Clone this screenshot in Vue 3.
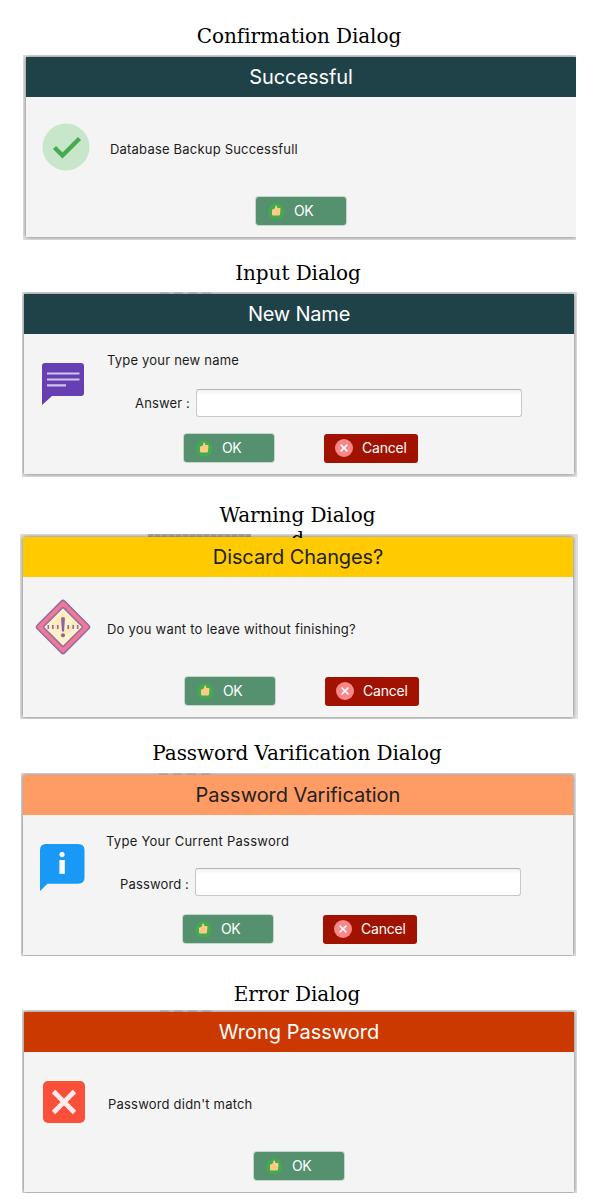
<script setup>
const dialogs = [
  { id: 'confirm', heading: 'Confirmation Dialog', title: 'Successful', message: 'Database Backup Successfull' },
  { id: 'input', heading: 'Input Dialog', title: 'New Name', message: 'Type your new name', label: 'Answer :', cancel: true },
  { id: 'warning', heading: 'Warning Dialog', overflow: 'd', title: 'Discard Changes?', message: 'Do you want to leave without finishing?', cancel: true },
  { id: 'password', heading: 'Password Varification Dialog', title: 'Password Varification', message: 'Type Your Current Password', label: 'Password :', cancel: true },
  { id: 'error', heading: 'Error Dialog', title: 'Wrong Password', message: "Password didn't match" },
]
</script>

<template>
  <main class="page">
    <section v-for="d in dialogs" :key="d.id" :class="['sample', d.id]">
      <h2 class="heading">{{ d.heading }}<template v-if="d.overflow"><br>{{ d.overflow }}</template></h2>
      <div class="frame">
        <i v-if="d.id !== 'confirm'" class="smudge"></i>
        <div class="dialog">
          <header class="bar"><span class="title">{{ d.title }}</span></header>
          <div class="body">
            <div class="icon">
              <svg v-if="d.id === 'confirm'" width="48" height="48" viewBox="0 0 48 48">
                <circle cx="24" cy="24" r="23.5" fill="#c8e6c9" />
                <path d="M12.5 24.5 L20.5 32.5 L37.5 15.5" fill="none" stroke="#43ab50" stroke-width="4.3" />
              </svg>
              <svg v-else-if="d.id === 'input'" width="42" height="42" viewBox="0 0 42 42">
                <path d="M3 0H39Q42 0 42 3V30Q42 33 39 33H10L0 42V3Q0 0 3 0Z" fill="#673fb5" />
                <path d="M5 10.5H37.5M5 16.5H37.5M5 22.3H24" stroke="#d1c4e9" stroke-width="2.2" />
              </svg>
              <svg v-else-if="d.id === 'warning'" width="56" height="56" viewBox="0 0 56 56">
                <rect x="8.6" y="8.6" width="38.8" height="38.8" rx="2.5" transform="rotate(45 28 28)" fill="#f47793" stroke="#9170a5" stroke-width="1.6" />
                <rect x="14" y="14" width="28" height="28" rx="1" transform="rotate(45 28 28)" fill="#fff1ce" stroke="#9170a5" stroke-width="1.6" />
                <path d="M16 26L28 14L33 19L21 31ZM24 37L39 22L42 25L27 40Z" fill="#ffe9ae" opacity=".8" />
                <path d="M13.3 26v4M17.8 26v4M22.8 26v4M33.2 26v4M38.2 26v4M42.7 26v4" stroke="#9170a5" stroke-width="1.7" />
                <path d="M26.1 19.5Q26.1 18 28 18Q29.9 18 29.9 19.5L29.1 32.5H26.9Z" fill="#8964a2" />
                <circle cx="28" cy="36.2" r="2" fill="#8964a2" />
              </svg>
              <svg v-else-if="d.id === 'password'" width="45" height="47" viewBox="0 0 45 47">
                <path d="M6 0H38Q44.5 0 44.5 6V34Q44.5 39.7 38 39.7H7.5L0 47V6Q0 0 6 0Z" fill="#1998f5" />
                <circle cx="22" cy="10.6" r="2.6" fill="#fff" />
                <path d="M19.4 16H24.8V29.8H19.4Z" fill="#fff" />
              </svg>
              <svg v-else width="42" height="42" viewBox="0 0 42 42">
                <rect width="42" height="42" rx="5" fill="#fa4f38" />
                <path d="M10.5 10.5L31.5 31.5M31.5 10.5L10.5 31.5" stroke="#ffebee" stroke-width="4.8" />
              </svg>
            </div>
            <div class="content">
              <p class="message"><span>{{ d.message }}</span></p>
              <label v-if="d.label" class="field">
                <span class="label">{{ d.label }}</span>
                <input class="entry" type="text">
              </label>
            </div>
          </div>
          <footer class="actions">
            <button class="btn ok">
              <svg width="17" height="17" viewBox="0 0 17 17">
                <circle cx="8.3" cy="8.5" r="8.2" fill="#43aa50" />
                <path d="M4 6.8L6.8 5.6L7.6 2.6Q9.6 2 9.3 5H11.6Q12.6 5 12.5 6.2L12 11.2Q11.9 12.6 10.8 12.6H5Q4 12.6 4 11.6Z" fill="#ffca83" />
              </svg>
              <span>OK</span>
            </button>
            <button v-if="d.cancel" class="btn cancel">
              <svg width="18" height="18" viewBox="0 0 18 18">
                <circle cx="9" cy="9" r="9" fill="#fa8787" />
                <path d="M5.6 5.6L12.4 12.4M12.4 5.6L5.6 12.4" stroke="#fff" stroke-width="1.5" />
              </svg>
              <span>Cancel</span>
            </button>
          </footer>
        </div>
      </div>
    </section>
  </main>
</template>

<style>
body { background: #fff; }
</style>

<style scoped>
.page {
  width: 600px;
  height: 1200px;
  overflow: hidden;
  background: #fff;
  font-family: Inter, "Noto Sans", sans-serif;
  color: #1c1c1c;
}
.sample { display: flex; flex-direction: column; }
.heading {
  box-sizing: border-box;
  margin: 0;
  width: 596px;
  flex: none;
  text-align: center;
  font: 400 20px/24px "DejaVu Serif", serif;
  letter-spacing: -.08px;
  color: #000;
}
.confirm .heading { height: 55px; padding-top: 24px; width: 598px; }
.input .heading { height: 52px; padding-top: 21px; }
.warning .heading { height: 60.5px; margin-bottom: -3.5px; padding-top: 26px; overflow: hidden; width: 595px; position: relative; z-index: 1; }
.password .heading { height: 54px; padding-top: 22px; width: 594px; }
.error .heading { height: 54px; padding-top: 26px; width: 594px; }

.frame {
  position: relative;
  box-sizing: border-box;
  overflow: hidden;
  background: #e2e2e2;
  height: 185px;
}
.confirm .frame { width: 553px; margin-left: 23px; padding: 2px 0 0 3px; }
.input .frame { width: 555px; margin-left: 22px; padding: 2px 0 0 2px; }
.warning .frame { width: 558px; margin-left: 20px; padding: 3px 0 0 3px; }
.password .frame { width: 555px; height: 183px; margin-left: 21px; padding: 2px 0 0 2px; }
.error .frame { width: 555px; height: 183px; margin-left: 22px; padding: 2px 0 0 2px; }
.smudge {
  position: absolute;
  top: 0;
  left: 138px;
  width: 53px;
  height: 2px;
  background: repeating-linear-gradient(90deg, #cacaca 0 9px, #dedede 9px 14px);
}
.warning .smudge { left: 128px; width: 103px; height: 3px; background: repeating-linear-gradient(90deg, #acacac 0 5px, #bebebe 5px 7px); }

.dialog {
  position: relative;
  width: 550px;
  height: 180px;
  background: #f4f4f4;
  box-shadow: 0 0 4px rgba(0, 0, 0, .5);
  display: flex;
  flex-direction: column;
}
.bar {
  height: 40px;
  display: flex;
  align-items: center;
  justify-content: center;
  background: #1f4148;
  color: #fff;
  font-size: 20px;
  letter-spacing: -.1px;
}
.warning .bar { background: #ffca00; color: #222; }
.password .bar { background: #ff9b65; color: #222; letter-spacing: -.02px; }
.error .bar { background: #cc3900; letter-spacing: 0; }
.input .bar { letter-spacing: -.2px; }

.body { height: 100px; display: flex; }
.icon { width: 67px; padding: 29px 0 0 16px; box-sizing: content-box; flex: none; }
.icon svg { display: block; }
.confirm .icon { padding-top: 26px; width: 68px; }
.input .icon { padding-left: 18px; width: 65px; }
.warning .icon { padding: 22px 0 0 12px; width: 72px; }
.password .icon { padding-left: 17px; width: 66px; }
.error .icon { padding-left: 19px; width: 65px; }
.content { flex: 1; }
.message { margin: 0; padding-top: 42px; font-size: 13px; line-height: 20px; letter-spacing: .2px; white-space: nowrap; }
.warning .message { letter-spacing: .22px; }
.input .message, .password .message { padding-top: 16px; }
.password .message { letter-spacing: .27px; }
.field { display: flex; align-items: center; margin-top: 19px; font-size: 13px; }
.password .field { margin-top: 17px; }
.label { width: 83px; text-align: right; white-space: nowrap; letter-spacing: .14px; }
.password .label { padding-top: 3px; }
.entry {
  box-sizing: border-box;
  width: 326px;
  height: 28px;
  margin: 0 0 0 6px;
  padding: 0 8px;
  border: 1px solid #c8c8c8;
  border-top-color: #b4b4b4;
  border-radius: 3px;
  background: linear-gradient(#f1f1f1, #fff 5px);
}

.actions { height: 40px; display: flex; align-items: flex-start; gap: 50px; padding-left: 160px; }
.confirm .actions, .error .actions { padding-left: 230px; }
.warning .actions { padding-left: 162px; }
.btn {
  box-sizing: border-box;
  display: flex;
  align-items: center;
  border: 0;
  padding: 0;
  height: 28px;
  border-radius: 3px;
  color: #fff;
  font: 400 14px/20px Inter, "Noto Sans", sans-serif;
}
.ok { width: 90px; padding-left: 12px; gap: 9px; background: #55916f; box-shadow: 0 0 0 1px rgba(85, 145, 111, .3); letter-spacing: -.4px; }
.cancel { width: 94px; height: 29px; padding-left: 11px; gap: 9px; background: #a11200; letter-spacing: -.2px; }
.cancel svg { margin-top: -1px; }
.cancel span { padding-bottom: 2px; }
</style>
